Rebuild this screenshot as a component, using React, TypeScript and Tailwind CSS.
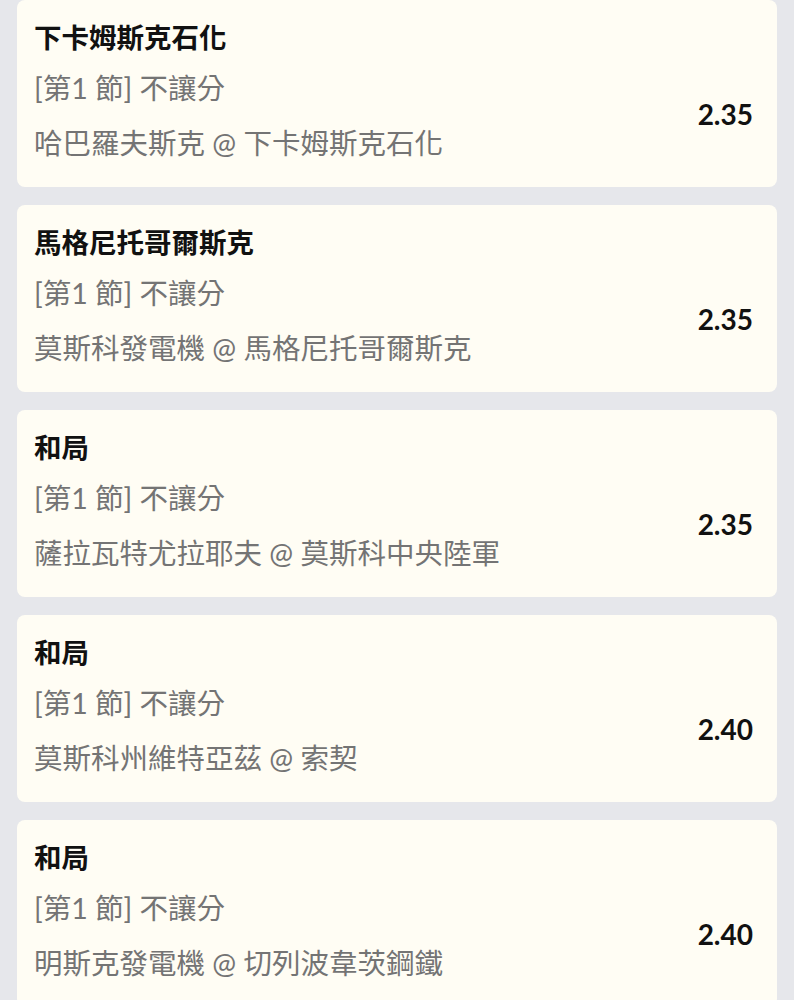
const rows = [
  { pick: '下卡姆斯克石化', market: '[第1 節] 不讓分', match: '哈巴羅夫斯克 @ 下卡姆斯克石化', odds: '2.35' },
  { pick: '馬格尼托哥爾斯克', market: '[第1 節] 不讓分', match: '莫斯科發電機 @ 馬格尼托哥爾斯克', odds: '2.35' },
  { pick: '和局', market: '[第1 節] 不讓分', match: '薩拉瓦特尤拉耶夫 @ 莫斯科中央陸軍', odds: '2.35' },
  { pick: '和局', market: '[第1 節] 不讓分', match: '莫斯科州維特亞茲 @ 索契', odds: '2.40' },
  { pick: '和局', market: '[第1 節] 不讓分', match: '明斯克發電機 @ 切列波韋茨鋼鐵', odds: '2.40' },
]

function BetCard({ pick, market, match, odds }: (typeof rows)[number]) {
  return (
    <div className="rounded-lg bg-[#fffdf4] pl-[17px] pr-[24px] pt-5 pb-[26px]">
      <div className="text-[27.5px] leading-[36px] font-bold text-[#111111]">{pick}</div>
      <div className="flex items-center justify-between">
        <div className="text-[28.5px] leading-[36px] text-[#747474]">
          <div className="mt-[14px]">{market}</div>
          <div className="mt-[19px]">{match}</div>
        </div>
        <div className="mt-[10px] text-[28px] leading-[36px] font-bold text-[#111111]">{odds}</div>
      </div>
    </div>
  )
}

export default function App() {
  return (
    <div
      className="min-h-screen bg-[#e6e7eb] px-[17px] pb-6"
      style={{ fontFamily: "Lato, 'Noto Sans CJK TC', sans-serif" }}
    >
      <div className="flex flex-col gap-[18px]">
        {rows.map((r, i) => (
          <BetCard key={i} {...r} />
        ))}
      </div>
    </div>
  )
}
